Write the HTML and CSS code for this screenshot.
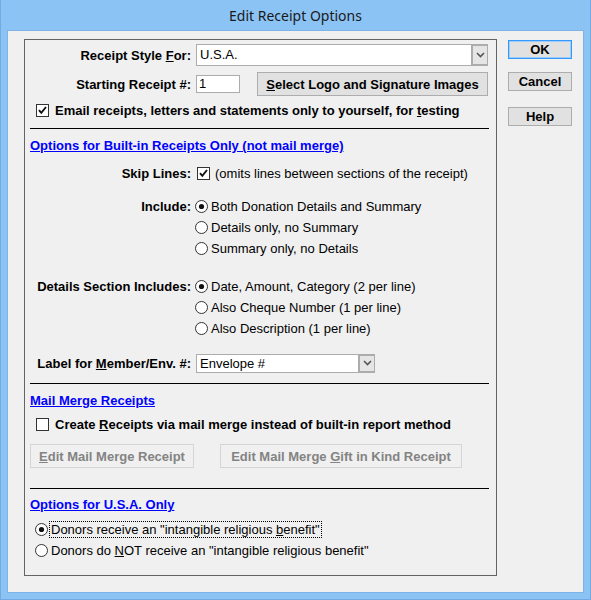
FILE: index.html
```html
<!DOCTYPE html>
<html lang="en">
  <head>
    <meta charset="UTF-8" />
    <title>Edit Receipt Options</title>
    <link rel="stylesheet" href="styles.css">
  </head>
  <body>
    <div class="window">
      <div class="titlebar">Edit Receipt Options</div>
      <div class="client">
        <div class="panel">
          <div class="field field-style">
            <span class="label">Receipt Style <u>F</u>or:</span>
            <div class="combo combo-style">
              <span class="combo-value">U.S.A.</span>
              <span class="combo-arrow">
                <svg width="9" height="6" viewBox="0 0 9 6"><path d="M1 1 L4.5 4.5 L8 1" fill="none" stroke="#555" stroke-width="1.6"/></svg>
              </span>
            </div>
          </div>

          <div class="field field-start">
            <span class="label">Starting Receipt #:</span>
            <div class="textbox">1</div>
            <button class="btn logo-btn"><u>S</u>elect Logo and Signature Images</button>
          </div>

          <div class="check-row row-email">
            <span class="check">
              <svg width="13" height="13" viewBox="0 0 13 13"><rect x="0.5" y="0.5" width="12" height="12" fill="#fff" stroke="#333"/><path d="M3 6.2 L5.3 8.8 L10 3" fill="none" stroke="#111" stroke-width="1.9"/></svg>
            </span>
            <span class="bold">Email receipts, letters and statements only to yourself, for <u>t</u>esting</span>
          </div>

          <hr class="sep sep-1">

          <a class="section-link link-1" href="#">Options for Built-in Receipts Only (not mail merge)</a>

          <div class="field field-skip">
            <span class="label">Skip Lines:</span>
            <span class="check skip-check">
              <svg width="13" height="13" viewBox="0 0 13 13"><rect x="0.5" y="0.5" width="12" height="12" fill="#fff" stroke="#333"/><path d="M3 6.2 L5.3 8.8 L10 3" fill="none" stroke="#111" stroke-width="1.9"/></svg>
            </span>
            <span>(omits lines between sections of the receipt)</span>
          </div>

          <div class="group group-include">
            <span class="label group-label">Include:</span>
            <div class="options">
              <div class="option">
                <svg class="radio" width="13" height="13" viewBox="0 0 13 13"><circle cx="6.5" cy="6.5" r="6" fill="#fff" stroke="#333"/><circle cx="6.5" cy="6.5" r="2.6" fill="#111"/></svg>
                <span>Both Donation Details and Summary</span>
              </div>
              <div class="option">
                <svg class="radio" width="13" height="13" viewBox="0 0 13 13"><circle cx="6.5" cy="6.5" r="6" fill="#fff" stroke="#333"/></svg>
                <span>Details only, no Summary</span>
              </div>
              <div class="option">
                <svg class="radio" width="13" height="13" viewBox="0 0 13 13"><circle cx="6.5" cy="6.5" r="6" fill="#fff" stroke="#333"/></svg>
                <span>Summary only, no Details</span>
              </div>
            </div>
          </div>

          <div class="group group-details">
            <span class="label group-label">Details Section Includes:</span>
            <div class="options">
              <div class="option">
                <svg class="radio" width="13" height="13" viewBox="0 0 13 13"><circle cx="6.5" cy="6.5" r="6" fill="#fff" stroke="#333"/><circle cx="6.5" cy="6.5" r="2.6" fill="#111"/></svg>
                <span>Date, Amount, Category (2 per line)</span>
              </div>
              <div class="option">
                <svg class="radio" width="13" height="13" viewBox="0 0 13 13"><circle cx="6.5" cy="6.5" r="6" fill="#fff" stroke="#333"/></svg>
                <span>Also Cheque Number (1 per line)</span>
              </div>
              <div class="option">
                <svg class="radio" width="13" height="13" viewBox="0 0 13 13"><circle cx="6.5" cy="6.5" r="6" fill="#fff" stroke="#333"/></svg>
                <span>Also Description (1 per line)</span>
              </div>
            </div>
          </div>

          <div class="field field-member">
            <span class="label">Label for <u>M</u>ember/Env. #:</span>
            <div class="combo combo-member">
              <span class="combo-value">Envelope #</span>
              <span class="combo-arrow">
                <svg width="9" height="6" viewBox="0 0 9 6"><path d="M1 1 L4.5 4.5 L8 1" fill="none" stroke="#555" stroke-width="1.6"/></svg>
              </span>
            </div>
          </div>

          <hr class="sep sep-2">

          <a class="section-link link-2" href="#">Mail Merge Receipts</a>

          <div class="check-row row-merge">
            <span class="check">
              <svg width="13" height="13" viewBox="0 0 13 13"><rect x="0.5" y="0.5" width="12" height="12" fill="#fff" stroke="#333"/></svg>
            </span>
            <span class="bold">Create <u>R</u>eceipts via mail merge instead of built-in report method</span>
          </div>

          <div class="merge-buttons">
            <button class="btn btn-disabled merge-receipt"><u>E</u>dit Mail Merge Receipt</button>
            <button class="btn btn-disabled merge-gift">Edit Mail Merge <u>G</u>ift in Kind Receipt</button>
          </div>

          <hr class="sep sep-3">

          <a class="section-link link-3" href="#">Options for U.S.A. Only</a>

          <div class="usa-options">
            <div class="option">
              <svg class="radio" width="13" height="13" viewBox="0 0 13 13"><circle cx="6.5" cy="6.5" r="6" fill="#fff" stroke="#333"/><circle cx="6.5" cy="6.5" r="2.6" fill="#111"/></svg>
              <span class="focused">Donors receive an "intangible religious <u>b</u>enefit"</span>
            </div>
            <div class="option">
              <svg class="radio" width="13" height="13" viewBox="0 0 13 13"><circle cx="6.5" cy="6.5" r="6" fill="#fff" stroke="#333"/></svg>
              <span class="plain-label">Donors do <u>N</u>OT receive an "intangible religious benefit"</span>
            </div>
          </div>
        </div>

        <div class="side-buttons">
          <button class="btn side-btn btn-default">OK</button>
          <button class="btn side-btn btn-cancel">Cancel</button>
          <button class="btn side-btn btn-help">Help</button>
        </div>
      </div>
    </div>
  </body>
</html>
```

FILE: styles.css
```css
body {
  margin: 0;
  font-family: 'Liberation Sans', Arial, sans-serif;
  font-size: 13px;
  color: #000;
}

.window {
  width: 591px;
  height: 600px;
  box-sizing: border-box;
  background: #8cc3f5;
  border: 1px solid #72abe2;
  border-top: none;
  padding: 0 6px 6px;
  display: flex;
  flex-direction: column;
}

.titlebar {
  height: 30px;
  line-height: 32px;
  text-align: center;
  font-family: 'Noto Sans', 'Open Sans', sans-serif;
  font-size: 14px;
  color: #1a1a1a;
}

.client {
  flex: 1;
  background: #f0f0f0;
  border: 1px solid #7db3e6;
  display: flex;
  align-items: flex-start;
  padding: 8px 0 0 16px;
}

.panel {
  width: 473px;
  height: 537px;
  box-sizing: border-box;
  border: 1px solid #646464;
  padding: 0 7px 0 5px;
}

.label {
  width: 161px;
  flex: none;
  text-align: right;
  font-weight: bold;
}

.bold {
  font-weight: bold;
}

.field {
  display: flex;
  align-items: center;
  gap: 5px;
}

.field-style {
  margin-top: 4px;
  height: 22px;
}

.field-start {
  margin-top: 6px;
  height: 24px;
}

.field-skip {
  margin-top: 11px;
  height: 16px;
}

.field-member {
  margin-top: 14px;
  height: 20px;
}

.combo {
  display: flex;
  box-sizing: border-box;
  background: #fff;
  border: 1px solid #acacac;
}

.combo-style {
  width: 292px;
  height: 22px;
}

.combo-member {
  width: 179px;
  height: 19px;
}

.combo-value {
  flex: 1;
  padding-left: 3px;
  line-height: 19px;
}

.combo-member .combo-value {
  line-height: 17px;
}

.combo-arrow {
  width: 16px;
  box-sizing: border-box;
  border: 2px solid #acacac;
  border-right: none;
  margin: -1px 0;
  background: #e5e5e5;
  display: flex;
  align-items: center;
  justify-content: center;
}

.textbox {
  width: 44px;
  height: 18px;
  box-sizing: border-box;
  border: 1px solid #acacac;
  background: #fff;
  padding-left: 2px;
  line-height: 16px;
}

.btn {
  font-family: inherit;
  font-size: 13px;
  font-weight: bold;
  color: #000;
  background: #e1e1e1;
  border: 1px solid #adadad;
  padding: 0;
  box-sizing: border-box;
}

.logo-btn {
  width: 231px;
  height: 24px;
  margin-left: 12px;
}

.check-row {
  display: flex;
  align-items: center;
  gap: 6px;
  padding-left: 6px;
}

.check,
.radio {
  display: block;
  flex: none;
}

.check svg {
  display: block;
}

.row-email {
  margin-top: 7px;
  height: 14px;
}

.row-merge {
  margin-top: 8px;
  height: 14px;
}

.skip-check {
  margin-left: 1px;
}

.sep {
  border: none;
  border-top: 1px solid #000;
  height: 0;
  margin: 0;
}

.sep-1 {
  margin-top: 11px;
}

.sep-2 {
  margin-top: 10px;
}

.sep-3 {
  margin-top: 20px;
}

.section-link {
  display: block;
  width: max-content;
  height: 16px;
  line-height: 16px;
  color: #0000ff;
  font-weight: bold;
  text-decoration: underline;
}

.link-1 {
  margin-top: 9px;
}

.link-2 {
  margin-top: 9px;
}

.link-3 {
  margin-top: 8px;
}

.group {
  display: flex;
  gap: 4px;
}

.group-label {
  line-height: 21px;
}

.group-include {
  margin-top: 15px;
}

.group-details {
  margin-top: 17px;
}

.option {
  display: flex;
  align-items: center;
  gap: 3px;
  height: 21px;
}

.merge-buttons {
  display: flex;
  gap: 26px;
  margin-top: 13px;
}

.btn-disabled {
  height: 24px;
  color: #838383;
  background: #f0f0f0;
  border-color: #d5d5d5;
}

.merge-receipt {
  width: 164px;
}

.merge-gift {
  width: 242px;
}

.usa-options {
  margin-top: 6px;
  padding-left: 5px;
}

.usa-options .option {
  gap: 2px;
}

.focused {
  outline: 1px dotted #000;
  outline-offset: 0;
  padding: 0 1px;
  line-height: 15px;
}

.plain-label {
  padding-left: 1px;
}

.side-buttons {
  display: flex;
  flex-direction: column;
  margin-left: 11px;
  margin-top: 1px;
}

.side-btn {
  width: 64px;
  height: 19px;
}

.btn-default {
  border-color: #3399ff;
  box-shadow: inset 0 0 0 1px #9fcdf7;
}

.btn-cancel {
  margin-top: 13px;
}

.btn-help {
  margin-top: 16px;
}
```
